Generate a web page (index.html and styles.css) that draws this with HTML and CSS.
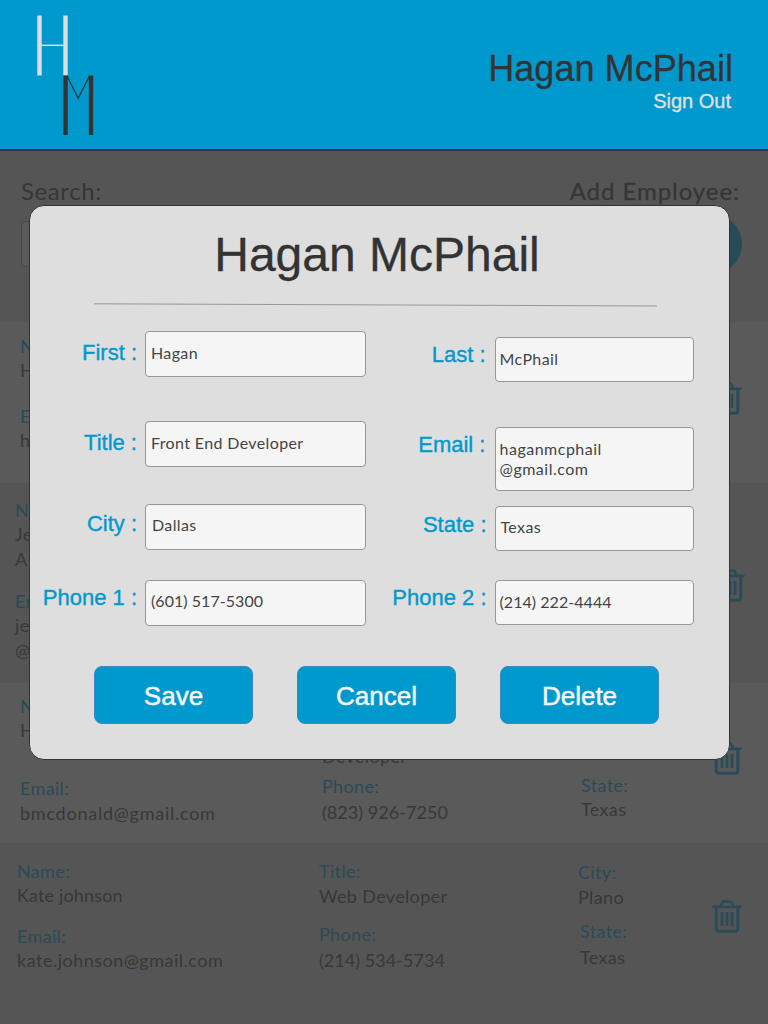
FILE: index.html
```html
<!DOCTYPE html>
<html lang="en">
<head>
<meta charset="utf-8">
<title>Employee Directory</title>
<link rel="stylesheet" href="styles.css">
</head>
<body>
<svg width="0" height="0" class="defs">
  <symbol id="trash" viewBox="0 0 30 33">
    <g fill="none" stroke="currentColor" stroke-linecap="round" stroke-linejoin="round">
      <path d="M1.5 6.8H28.5" stroke-width="2.8"/>
      <path d="M9 6.200 10.200 2.600Q10.500 1.600 11.600 1.600H18.400Q19.500 1.600 19.800 2.600L21 6.200" stroke-width="2.600"/>
      <path d="M4.200 7V28.300Q4.200 31.200 7 31.200H23Q25.800 31.200 25.800 28.300V7" stroke-width="3"/>
      <path d="M10 12V26M15 12V26M20 12V26" stroke-width="2.800" stroke-linecap="butt"/>
    </g>
  </symbol>
</svg>
<div class="page">
  <header class="header">
    <svg class="logo" width="60" height="122" viewBox="0 0 60 122">
      <path d="M3.500 .500V60.500M29.500 .500V60.500" stroke="#dedede" stroke-width="4.400"/>
      <path d="M5 30.300H28" stroke="#dedede" stroke-width="1.500"/>
      <path d="M29.500 60.500V120M55 60.500V120" stroke="#333" stroke-width="4.400"/>
      <path d="M31 61 42.200 83.200 53.500 61" stroke="#333" stroke-width="1.300" fill="none"/>
    </svg>
    <div class="account">
      <div class="account-name">Hagan McPhail</div>
      <div class="sign-out">Sign Out</div>
    </div>
  </header>

  <section class="toolbar">
    <div class="search">
      <div class="tool-label">Search:</div>
      <div class="search-box"></div>
    </div>
    <div class="add">
      <div class="tool-label add-label">Add Employee:</div>
      <div class="add-button"></div>
    </div>
  </section>

  <main>
    <section class="row row-1">
      <div class="col col-a">
        <div class="key">N</div><div class="val">H</div>
        <div class="key">E</div><div class="val">h</div>
      </div>
      <div class="col col-b"></div>
      <div class="col col-c"></div>
      <svg class="trash"><use href="#trash"/></svg>
    </section>
    <section class="row row-2">
      <div class="col col-a">
        <div class="key">N</div><div class="val">Je<br>A</div>
        <div class="key">En</div><div class="val">je<br>@</div>
      </div>
      <div class="col col-b"></div>
      <div class="col col-c"></div>
      <svg class="trash"><use href="#trash"/></svg>
    </section>
    <section class="row row-3">
      <div class="col col-a">
        <div class="key">N</div><div class="val">H</div>
        <div class="key">Email:</div><div class="val mail">bmcdonald@gmail.com</div>
      </div>
      <div class="col col-b">
        <div class="val dev">Developer</div>
        <div class="key">Phone:</div><div class="val num">(823) 926-7250</div>
      </div>
      <div class="col col-c">
        <div class="key">State:</div><div class="val">Texas</div>
      </div>
      <svg class="trash"><use href="#trash"/></svg>
    </section>
    <section class="row row-4">
      <div class="col col-a">
        <div class="key">Name:</div><div class="val person">Kate johnson</div>
        <div class="key">Email:</div><div class="val mail">kate.johnson@gmail.com</div>
      </div>
      <div class="col col-b">
        <div class="key">Title:</div><div class="val dev">Web Developer</div>
        <div class="key">Phone:</div><div class="val num">(214) 534-5734</div>
      </div>
      <div class="col col-c">
        <div class="key">City:</div><div class="val">Plano</div>
        <div class="key state">State:</div><div class="val state">Texas</div>
      </div>
      <svg class="trash"><use href="#trash"/></svg>
    </section>
  </main>

  <div class="modal" role="dialog">
    <h1 class="modal-title">Hagan McPhail</h1>
    <svg class="divider" width="563" height="4" viewBox="0 0 563 4"><path d="M0 .800 563 3" stroke="#979797" stroke-width="1"/></svg>
    <div class="form">
      <div class="form-col left">
        <div class="field first"><div class="label">First :</div><div class="input">Hagan</div></div>
        <div class="field title"><div class="label">Title :</div><div class="input">Front End Developer</div></div>
        <div class="field city"><div class="label">City :</div><div class="input">Dallas</div></div>
        <div class="field phone1"><div class="label">Phone 1 :</div><div class="input">(601) 517-5300</div></div>
      </div>
      <div class="form-col right">
        <div class="field last"><div class="label">Last :</div><div class="input">McPhail</div></div>
        <div class="field email"><div class="label">Email :</div><div class="input">haganmcphail<br>@gmail.com</div></div>
        <div class="field region"><div class="label">State :</div><div class="input">Texas</div></div>
        <div class="field phone2"><div class="label">Phone 2 :</div><div class="input">(214) 222-4444</div></div>
      </div>
    </div>
    <div class="actions">
      <button class="btn">Save</button>
      <button class="btn">Cancel</button>
      <button class="btn">Delete</button>
    </div>
  </div>
</div>
</body>
</html>
```
FILE: styles.css
```css
* { box-sizing: border-box; }
body { margin: 0; background: #555; font-family: Lato, sans-serif; }
.defs { position: absolute; }
.page { position: relative; width: 768px; height: 1024px; overflow: hidden; background: #555; }

.header {
  display: flex; justify-content: space-between;
  height: 151px; padding: 15px 35px 0 35.5px;
  background: #0099ce; border-bottom: 2px solid #333;
}
.logo { display: block; }
.account { padding-top: 34px; text-align: right; font-family: "Liberation Sans", Arial, sans-serif; }
.account-name { font-size: 36px; line-height: 40px; color: #333; letter-spacing: .05px; -webkit-text-stroke: .3px #333; }
.sign-out { margin: 0 2px 0 0; font-size: 20px; line-height: 24px; color: #dedede; -webkit-text-stroke: .4px #dedede; }

.toolbar { display: flex; justify-content: space-between; height: 171px; padding: 25px 26px 0 21px; color: #363636; }
.tool-label { font-size: 24px; line-height: 30px; letter-spacing: .6px; }
.add-label { margin-right: 2px; letter-spacing: .95px; -webkit-text-stroke: .3px #363636; }
.search-box { width: 300px; height: 46px; margin-top: 15px; border: 1px solid #484848; border-radius: 4px; background: #5a5a5a; }
.add-button { width: 60px; height: 60px; margin: 8px 0 0 auto; border-radius: 50%; background: #294b58; }

.row {
  display: grid; grid-template-columns: 302px 259px 1fr 30px;
  padding: 0 26px 0 17px; background: #5a5a5a;
  font-size: 18px; line-height: 24px; letter-spacing: .35px;
}
.key { color: #2b4a56; }
.val { color: #383838; }
.num { letter-spacing: .05px; }
.person { letter-spacing: .15px; }
.trash { display: block; width: 30px; height: 33px; color: #2a4c59; }

.row-1 { height: 161px; padding-left: 20px; }
.row-1 .col-a { padding-top: 12px; }
.row-1 .key + .val { margin-bottom: 22px; }
.row-1 .trash { margin-top: 60px; }

.row-2 { height: 200px; padding-left: 15px; padding-right: 23px; background: #555; }
.row-2 .col-a { padding-top: 15px; }
.row-2 .val { line-height: 24.500px; }
.row-2 .key + .val { margin-bottom: 18px; }
.row-2 .trash { margin-top: 86px; }

.row-3 { height: 160px; padding-left: 20px; }
.row-3 .col-a { padding-top: 11px; }
.row-3 .col-a .val { margin-bottom: 34px; }
.row-3 .mail { margin-top: 1px; letter-spacing: .75px; }
.row-3 .col-b { padding-top: 61px; }
.row-3 .dev { margin-bottom: 6px; }
.row-3 .num { margin-top: 2px; }
.row-3 .col-c { padding-top: 90px; }
.row-3 .trash { margin-top: 59px; }

.row-4 { height: 181px; background: #555; }
.row-4 .col-a, .row-4 .col-b { padding-top: 16px; }
.row-4 .col-a .val { margin-bottom: 17px; }
.row-4 .mail { letter-spacing: .5px; }
.row-4 .dev { margin: 1px 0 14px; }
.row-4 .num { margin-top: 2px; }
.row-4 .col-c { padding-top: 17px; }
.row-4 .col-c .val { margin-top: 1px; }
.row-4 .state { margin-left: 2px; }
.row-4 .key.state { margin-top: 10px; }
.row-4 .val.state { margin-top: 2px; }
.row-4 .trash { margin-top: 57px; }

.modal {
  position: absolute; left: 29px; top: 205px; width: 701px; height: 555px;
  display: flex; flex-direction: column;
  background: #dedede; border: 1px solid #333; border-radius: 15px;
}
.modal-title {
  margin: 22px 0 0; text-align: center; padding-right: 5px;
  font: normal 48px/54px "Liberation Sans", Arial, sans-serif; color: #333; letter-spacing: 0; -webkit-text-stroke: .3px #333;
}
.divider { display: block; flex: none; margin: 21px 0 0 64px; }
.form { display: flex; flex: none; height: 340px; padding-top: 24px; }
.form-col { display: flex; flex-direction: column; }
.left { width: 336px; }
.right { width: 327.500px; padding-top: 6px; }
.field { display: flex; justify-content: flex-end; gap: 8px; }
.label { font: 22px/24px "Liberation Sans", Arial, sans-serif; color: #0099ce; -webkit-text-stroke: .35px #0099ce; padding-top: 6px; white-space: nowrap; }
.input {
  height: 45px; padding: 11px 5px 0; border: 1px solid #979797; border-radius: 4px;
  background: #f5f5f5; color: #444; font-size: 16px; line-height: 20px; letter-spacing: .37px;
}
.left .input { width: 221px; height: 46px; }
.right .input { width: 199px; }
.right .input { padding-left: 4px; }
.last .label, .email .label { margin-right: 1px; }
.first .label, .title .label { padding-top: 10px; }
.first { margin-bottom: 44px; }
.title { margin-bottom: 37px; }
.city { margin-bottom: 30px; }
.city .label { padding-top: 8px; }
.city .input { padding: 10px 6px 0; }
.phone1 .input { padding-top: 10px; }
.phone1 .input, .phone2 .input { letter-spacing: .05px; }
.last { margin-bottom: 45px; }
.email { margin-bottom: 15px; }
.email .input { height: 64px; letter-spacing: .5px; }
.region { margin-bottom: 29px; }
.region .label { padding-top: 7px; }
.right.form-col .region .input { padding: 10px 5px 0; }

.actions { display: flex; gap: 44px; padding: 18.500px 0 0 64px; }
.btn {
  width: 159px; height: 58px; padding: 3px 0 0; border: 1px solid #3f87c6; border-radius: 8px;
  background: #0099ce; color: #f5f5f5; font: 26px/30px "Liberation Sans", Arial, sans-serif; -webkit-text-stroke: .5px #f5f5f5;
}
```
